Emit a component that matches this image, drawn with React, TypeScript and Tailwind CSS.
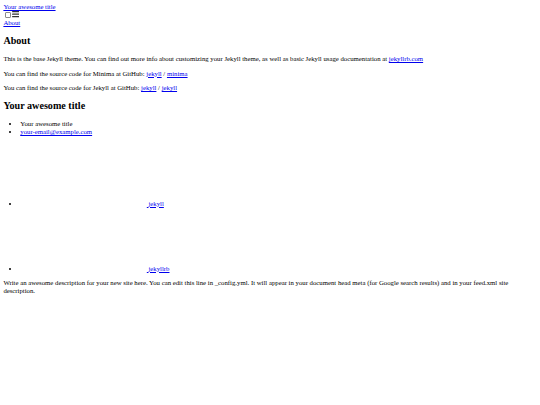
export default function App() {
  const link = "text-[#0000ee] underline";
  return (
    <div className="bg-white min-h-[405px] w-full">
      <div className="font-['Liberation_Serif','Times_New_Roman',serif] text-[6.75px] leading-[1.15] text-black p-[3.375px]">
        <header>
          <div>
            <a className={link} href="#">Your awesome title</a>
            <nav className="block">
              <div className="flex items-end h-[7.76px] pb-[1.2px]">
                <span className="block box-border w-[5.48px] h-[5.48px] mr-[1.27px] ml-[1.69px] border-[0.5px] border-[#8a8a8a] rounded-[1px] bg-white"></span>
                <label>
                  <svg viewBox="0 0 18 15" className="block w-[7.6px] h-[6.33px]">
                    <path fill="#333333" d="M18,1.484c0,0.82-0.665,1.484-1.484,1.484H1.484C0.665,2.969,0,2.304,0,1.484l0,0C0,0.665,0.665,0,1.484,0 h15.031C17.335,0,18,0.665,18,1.484L18,1.484z" />
                    <path fill="#333333" d="M18,7.516C18,8.335,17.335,9,16.516,9H1.484C0.665,9,0,8.335,0,7.516l0,0c0-0.82,0.665-1.484,1.484-1.484 h15.031C17.335,6.031,18,6.696,18,7.516L18,7.516z" />
                    <path fill="#333333" d="M18,13.516C18,14.335,17.335,15,16.516,15H1.484C0.665,15,0,14.335,0,13.516l0,0 c0-0.82,0.665-1.483,1.484-1.483h15.031C17.335,12.031,18,12.695,18,13.516L18,13.516z" />
                  </svg>
                </label>
              </div>
              <div>
                <a className={link} href="#">About</a>
              </div>
            </nav>
          </div>
        </header>
        <main>
          <div>
            <article>
              <header>
                <h1 className="text-[1.5em] font-bold my-[0.83em]">About</h1>
              </header>
              <div>
                <p className="my-[1em]">
                  This is the base Jekyll theme. You can find out more info about customizing your Jekyll theme, as well as basic Jekyll usage documentation at{" "}
                  <a className={link} href="#">jekyllrb.com</a>
                </p>
                <p className="my-[1em]">
                  You can find the source code for Minima at GitHub:{" "}
                  <a className={link} href="#">jekyll</a> /{" "}
                  <a className={link} href="#">minima</a>
                </p>
                <p className="my-[1em]">
                  You can find the source code for Jekyll at GitHub:{" "}
                  <a className={link} href="#">jekyll</a> /{" "}
                  <a className={link} href="#">jekyll</a>
                </p>
              </div>
            </article>
          </div>
        </main>
        <footer>
          <div>
            <h2 className="text-[1.5em] font-bold my-[0.83em]">Your awesome title</h2>
            <div>
              <div>
                <ul className="list-disc pl-[2.5em] my-[1em]">
                  <li>Your awesome title</li>
                  <li>
                    <a className={link} href="#">your-email@example.com</a>
                  </li>
                </ul>
              </div>
              <div>
                <ul className="list-disc pl-[2.5em] mt-[0.75em] mb-[1em]">
                  <li>
                    <a className={link} href="#">
                      <svg className="inline align-baseline w-[126.56px] h-[63.28px]"></svg>{" "}
                      <span>jekyll</span>
                    </a>
                  </li>
                  <li>
                    <a className={link} href="#">
                      <svg className="inline align-baseline w-[126.56px] h-[63.28px]"></svg>{" "}
                      <span>jekyllrb</span>
                    </a>
                  </li>
                </ul>
              </div>
              <div>
                <p className="my-[1em]">
                  Write an awesome description for your new site here. You can edit this line in _config.yml. It will appear in your document head meta (for Google search results) and in your feed.xml site description.
                </p>
              </div>
            </div>
          </div>
        </footer>
      </div>
    </div>
  );
}
